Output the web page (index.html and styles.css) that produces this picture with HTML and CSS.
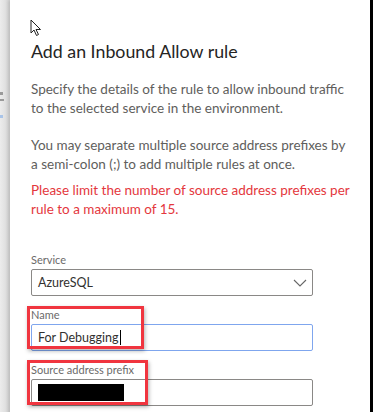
FILE: index.html
```html
<!DOCTYPE html>
<html lang="en">
<head>
    <meta charset="UTF-8">
    <meta name="viewport" content="width=device-width, initial-scale=1.0">
    <title>Add an Inbound Allow rule</title>
    <link rel="stylesheet" href="styles.css">
</head>
<body>
    <div class="top-bar"></div>
    <div class="frame">
        <!-- Page behind the panel -->
        <div class="backdrop">
            <span class="ghost g1"></span>
            <span class="ghost g2"></span>
            <span class="ghost g3"></span>
        </div>

        <!-- Side panel -->
        <div class="panel">
            <h1>Add an Inbound Allow rule</h1>

            <p class="info">Specify the details of the rule to allow inbound traffic<br>to the selected service in the environment.</p>
            <p class="info">You may separate multiple source address prefixes by<br>a semi-colon (;) to add multiple rules at once.</p>
            <p class="warning">Please limit the number of source address prefixes per<br>rule to a maximum of 15.</p>

            <div class="field">
                <label for="service">Service</label>
                <div class="select" id="service">
                    <span>AzureSQL</span>
                    <svg class="chevron" width="14" height="8" viewBox="0 0 14 8">
                        <path d="M1 1 L7 7 L13 1" fill="none" stroke="#666" stroke-width="1.1"/>
                    </svg>
                </div>
            </div>

            <div class="field">
                <span class="mark mark-name"></span>
                <label for="name">Name</label>
                <div class="input focused" id="name">
                    <span>For Debugging</span><span class="caret"></span>
                </div>
            </div>

            <div class="field">
                <span class="mark mark-prefix"></span>
                <label for="prefix">Source address prefix</label>
                <div class="input" id="prefix">
                    <span class="redacted"></span>
                </div>
            </div>

            <!-- Mouse pointer -->
            <svg class="pointer" width="12" height="18" viewBox="0 0 12 18">
                <path d="M1 1 L1 14 L4 11 L6.5 16.5 L8.5 15.5 L6 10.5 L10.5 10.5 Z" fill="#fff" stroke="#222" stroke-width="1"/>
            </svg>
        </div>
        <div class="edge"></div>
    </div>
</body>
</html>
```

FILE: styles.css
```css
/* Basic Reset */
* {
    margin: 0;
    padding: 0;
    box-sizing: border-box;
}

body {
    width: 373px;
    height: 412px;
    overflow: hidden;
    display: flex;
    flex-direction: column;
    background-color: #ffffff;
    font-family: 'Lato', 'Open Sans', sans-serif;
    color: #323130;
}

.top-bar {
    height: 3px;
    background-color: #474747;
}

.frame {
    flex: 1;
    display: flex;
}

/* Page behind the panel */
.backdrop {
    width: 10px;
    background: linear-gradient(to right, #ececec, #d6d6d6);
    display: flex;
    flex-direction: column;
    padding-top: 92px;
}
.ghost {
    display: block;
    width: 3px;
    height: 3px;
    background-color: #9a9a9a;
    margin-bottom: 4px;
}
.g2 {
    width: 4px;
    height: 2px;
}
.g3 {
    margin-top: 10px;
    background-color: #a9c4e8;
}

/* Side panel */
.panel {
    flex: 1;
    position: relative;
    background-color: #ffffff;
    padding: 39px 0 0 21px;
    box-shadow: -2px 0 3px rgba(0, 0, 0, 0.12);
}

.edge {
    width: 3px;
    background-color: #000000;
}

.panel h1 {
    font-size: 17.8px;
    font-weight: 400;
    line-height: 24px;
    color: #252423;
    margin-bottom: 17px;
}

.info,
.warning {
    font-size: 13.5px;
    line-height: 19px;
    white-space: nowrap;
    color: #605e5c;
    margin-bottom: 18px;
}
.info + .warning {
    margin-top: -11px;
}
.warning {
    color: #e4373d;
    margin-bottom: 33px;
}

/* Form fields */
.field {
    position: relative;
    width: 282px;
    margin-bottom: 11px;
}
.field label {
    display: block;
    font-size: 11px;
    line-height: 15px;
    margin-bottom: 2px;
    color: #6b6a69;
}

.select,
.input {
    height: 27px;
    border: 1px solid #8a8886;
    border-radius: 2px;
    display: flex;
    align-items: center;
    padding: 0 6px;
    font-size: 12.5px;
    color: #323130;
}
.select {
    justify-content: space-between;
    padding-right: 5px;
}
.input.focused {
    border-color: #7fa6ee;
}
.caret {
    width: 1px;
    height: 15px;
    background-color: #000;
    margin-left: 1px;
}
.redacted {
    width: 86px;
    height: 17px;
    background-color: #000;
}

/* Red annotation boxes */
.mark {
    position: absolute;
    left: -4px;
    top: -1px;
    height: 43px;
    border: 3px solid #f0353f;
    box-shadow: 1px 2px 4px rgba(0, 0, 0, 0.3);
    z-index: 1;
}
.mark-name {
    width: 117px;
}
.mark-prefix {
    width: 121px;
    top: -2px;
    height: 45px;
}

/* Mouse pointer */
.pointer {
    position: absolute;
    left: 20px;
    top: 19px;
}
```
